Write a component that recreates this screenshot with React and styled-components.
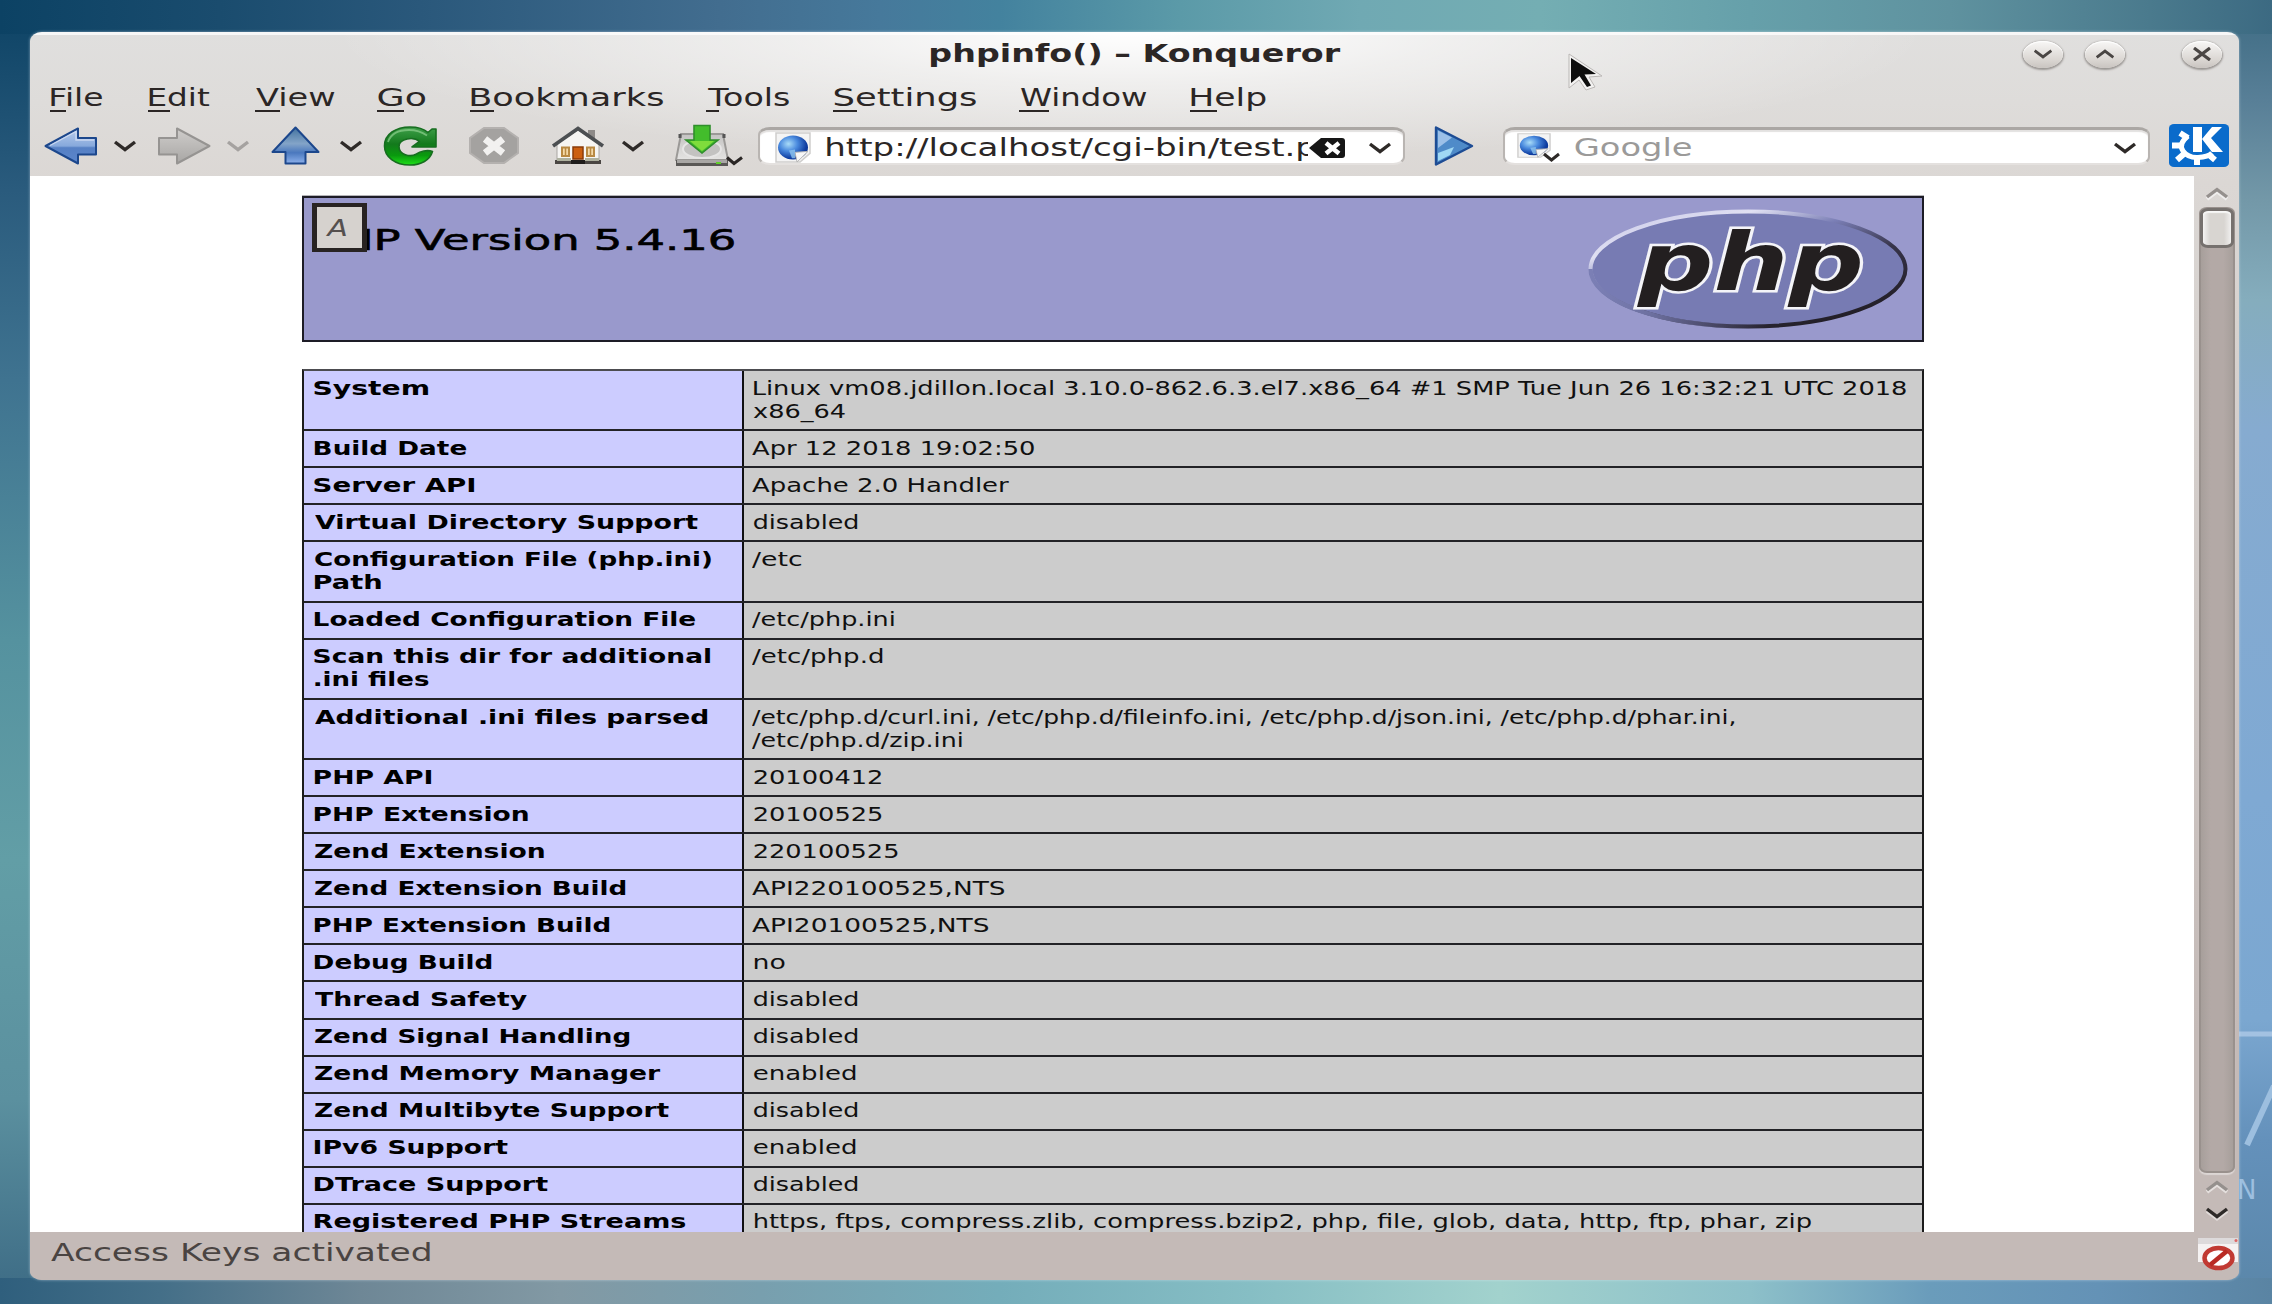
import React from "react";
import styled, { createGlobalStyle } from "styled-components";

const FONT = '"DejaVu Sans", Verdana, sans-serif';

const GlobalStyle = createGlobalStyle`
  * { box-sizing: border-box; }
  body { margin: 0; overflow: hidden; font-family: ${FONT}; }
  svg { display: block; }
`;

/* ---------- text set to an exact inked width ---------- */

const FitBox = styled.span`
  display: block;
  flex: none;
  white-space: pre;
  font-family: ${FONT};
  font-size: ${(p) => p.$size}px;
  font-weight: ${(p) => p.$weight};
  font-style: ${(p) => p.$fontStyle};
  line-height: ${(p) => p.$line}px;
  color: ${(p) => p.$color};
`;

const FitText = styled.span`
  display: inline-block;
  transform-origin: 0 50%;
`;

const pen = document.createElement("canvas").getContext("2d");

function Fit({ children, w, size = 25, weight = 400, fontStyle = "normal", line = 30, color = "#2b2625" }) {
  pen.font = `${fontStyle} ${weight} ${size}px ${FONT}`;
  const m = pen.measureText(children);
  const k = w / (m.actualBoundingBoxLeft + m.actualBoundingBoxRight);
  return (
    <FitBox $size={size} $weight={weight} $fontStyle={fontStyle} $line={line} $color={color} style={{ width: w }}>
      <FitText style={{ transform: `translateX(${m.actualBoundingBoxLeft * k}px) scaleX(${k})` }}>{children}</FitText>
    </FitBox>
  );
}

/* ---------- desktop and window ---------- */

const Desktop = styled.div`
  position: relative;
  width: 2272px;
  height: 1304px;
  padding: 32px 33px 24px 30px;
  overflow: hidden;
  background-color: #5b8ba6;
  background-repeat: no-repeat;
  background-image:
    linear-gradient(90deg, #0c4264 0, #1a4c6e 220px, #2a587b 420px, #426d8f 720px, #46799b 880px, #43829e 1000px, #5b9aa8 1180px, #70a9b3 1360px, #74aeb3 1540px, #66a0aa 1750px, #5f929f 1950px, #4a7a8d 2150px, #3c6a82 100%),
    linear-gradient(90deg, #2f5f7d 0, #446f88 160px, #6e8796 360px, #8299a4 560px, #789fae 760px, #74adba 1000px, #86bec4 1250px, #a2d2cd 1500px, #8dc0c9 1750px, #6a9cbb 1930px, #6492b6 2100px, #5a84a3 100%),
    linear-gradient(180deg, #0c4264 0, #2a5b7d 190px, #3f7390 380px, #55929f 640px, #629ea6 860px, #5b909f 1100px, #3c6a84 100%),
    linear-gradient(180deg, #3c6a82 0, #587f97 100px, #7398a8 200px, #85adbd 300px, #86abd0 430px, #7fa9d3 800px, #7ba7d0 1020px, #6491bb 1140px, #5a86a8 100%);
  background-size: 100% 34px, 100% 26px, 40px 100%, 40px 100%;
  background-position: 0 0, 0 100%, 0 0, 100% 0;
`;

const Wallpaper = styled.svg`
  position: absolute;
  right: 0;
  top: 1000px;
`;

const Window = styled.main`
  position: relative;
  display: flex;
  flex-direction: column;
  height: 1248px;
  border-radius: 12px / 9px;
  overflow: hidden;
  background:
    radial-gradient(ellipse 800px 130px at 1100px 0, #fff 0, rgba(255, 255, 255, 0.52) 40%, rgba(255, 255, 255, 0) 100%) no-repeat,
    linear-gradient(180deg, #e0dfde 0, #dedcda 70px, #dbd7d4 150px, #c4bab7 1000px, #c4bab7 100%);
  box-shadow: 0 0 3px rgba(225, 240, 250, 0.55);
`;

const TitleBar = styled.header`
  display: flex;
  height: 44px;
  flex: none;
  padding: 3px 17px 0 901px;
  border-top: 3px solid rgba(255, 255, 255, 0.75);
`;

const WindowButtons = styled.div`
  display: flex;
  margin-left: auto;
  padding-top: 3px;
`;

const WindowButton = styled.button`
  display: grid;
  place-items: center;
  width: 40px;
  height: 27px;
  margin: 0 0 0 ${(p) => p.$gap}px;
  padding: 0 0 2px;
  border: 0;
  border-radius: 50%;
  background: linear-gradient(#f8f7f6, #dad6d2 70%, #c9c4c0);
  box-shadow: 0 1px 2px 1px #9a9693, inset 0 1px 1px #fff;
`;

const MenuBar = styled.nav`
  display: flex;
  align-items: center;
  flex: none;
  height: 43px;
  padding-left: 21px;
`;

const MenuItem = styled.a`
  position: relative;
  margin-right: ${(p) => p.$gap}px;
  &::after {
    content: "";
    position: absolute;
    left: -1px;
    bottom: 1px;
    width: ${(p) => p.$key}px;
    height: 2px;
    background: #2b2625;
  }
`;

const ToolBar = styled.div`
  display: flex;
  align-items: center;
  flex: none;
  height: 57px;
  padding: 0 0 4px 14px;
`;

const Tool = styled.span`
  flex: none;
  margin-left: ${(p) => p.$gap}px;
`;

const Field = styled.div`
  display: flex;
  align-items: center;
  flex: none;
  width: 647px;
  height: 38px;
  margin-left: ${(p) => p.$gap}px;
  padding: 3px 11px 0 ${(p) => p.$inset}px;
  border: 2px solid #b9b5b2;
  border-top: 3px solid #aba7a4;
  border-bottom-color: #e4e1df;
  border-radius: 12px / 8px;
  background: #fff;
  box-shadow: inset 0 2px 1px #e3e1e0;
`;

const UrlText = styled.div`
  width: 483px;
  padding-left: 2px;
  margin-left: 14px;
  overflow: hidden;
`;

const Push = styled.span`
  margin-left: auto;
`;

const Body = styled.section`
  display: flex;
  flex: none;
  height: 1056px;
`;

const Page = styled.div`
  width: 2164px;
  height: 1056px;
  padding: 20px 0 0 272px;
  overflow: hidden;
  background: #fff;
`;

/* ---------- page content ---------- */

const Banner = styled.div`
  position: relative;
  display: flex;
  justify-content: space-between;
  width: 1622px;
  height: 146px;
  padding: 10px 14px 0 12px;
  border: 2px solid #1d1c26;
  background: #9999cc;
  box-shadow: 0 -1px 0 #b5b5b8;
`;

const Heading = styled.h1`
  margin: 14px 0 0;
  -webkit-text-stroke: 0.6px #000;
`;

const AccessKey = styled.kbd`
  position: absolute;
  left: 8px;
  top: 5px;
  display: flex;
  align-items: center;
  width: 55px;
  height: 49px;
  padding: 0 0 0 8px;
  border: 4px solid #282322;
  border-width: 4px 5px;
  background: #d6d2ce;
`;

const InfoTable = styled.div`
  width: 1622px;
  margin-top: 27px;
  border: 2px solid #1c1c1c;
  border-top-color: #4c4c50;
`;

const InfoRow = styled.div`
  display: grid;
  grid-template-columns: 440px 1fr;
  height: ${(p) => (p.$tall ? 60.25 : 37.06)}px;
  border-bottom: 2px solid #222226;
`;

const NameCell = styled.div`
  padding: ${(p) => `5.6px 0 0 ${p.$inset}px`};
  border-right: 2px solid #101012;
  background: #ccccff;
`;

const ValueCell = styled.div`
  padding: 5.6px 0 0 ${(p) => p.$inset}px;
  background: #cccccc;
`;

/* ---------- scrollbar and status ---------- */

const ScrollBar = styled.aside`
  display: flex;
  flex-direction: column;
  align-items: center;
  width: 45px;
  padding-top: 11px;
`;

const Groove = styled.div`
  width: 36px;
  height: 966px;
  margin: 8px 0 7px;
  border: 2px solid #99918d;
  border-radius: 8px / 6px;
  background: linear-gradient(90deg, #a79f9b, #b3a9a6 30%, #b3a9a6 70%, #a79f9b);
  box-shadow: 0 2px 1px #dcd6d4;
`;

const Thumb = styled.div`
  width: 34px;
  height: 40px;
  margin: -1px 0 0 -1px;
  border: 3px solid #76716e;
  border-radius: 8px / 6px;
  background: linear-gradient(90deg, #f4f3f2, #d8d5d1 25%, #d8d5d1 75%, #f0efee);
  box-shadow: inset 0 2px 1px #f7f7f6;
`;

const DownArrows = styled.div`
  display: flex;
  flex-direction: column;
  gap: 15px;
`;

const StatusBar = styled.footer`
  display: flex;
  flex: none;
  justify-content: space-between;
  height: 48px;
  padding: 6px 1px 0 21px;
  background: #c4bab7;
`;

const Pointer = styled.svg`
  position: absolute;
  left: 1565px;
  top: 51px;
`;

/* ---------- icons ---------- */

const Chevron = ({ w = 24, h = 12, up, color = "#2e2a28", halo = "none" }) => {
  const d = up ? "M2 10 L12 2.5 L22 10" : "M2 2 L12 9.5 L22 2";
  return (
    <svg width={w} height={h} viewBox="0 0 24 12" preserveAspectRatio="none" fill="none" overflow="visible">
      <path d={d} stroke={halo} strokeWidth="4" transform="translate(0 2)" />
      <path d={d} stroke={color} strokeWidth="3.4" />
    </svg>
  );
};

const Defs = styled.svg`
  position: absolute;
`;

const SharedGradients = () => (
  <Defs width="0" height="0">
    <defs>
      <linearGradient id="blue" x1="0" y1="0" x2="0" y2="1">
        <stop offset="0" stopColor="#b9cdec" />
        <stop offset="0.5" stopColor="#87a9dc" />
        <stop offset="0.55" stopColor="#5680c4" />
        <stop offset="1" stopColor="#5b86cc" />
      </linearGradient>
      <linearGradient id="up" x1="0" y1="0" x2="0" y2="1">
        <stop offset="0" stopColor="#42729f" />
        <stop offset="0.45" stopColor="#83a4c8" />
        <stop offset="0.7" stopColor="#4a78be" />
        <stop offset="1" stopColor="#8db1ec" />
      </linearGradient>
      <linearGradient id="grey" x1="0" y1="0" x2="0" y2="1">
        <stop offset="0" stopColor="#cfcdcb" />
        <stop offset="1" stopColor="#a8a6a4" />
      </linearGradient>
      <linearGradient id="green" x1="0" y1="0" x2="0" y2="1">
        <stop offset="0" stopColor="#3f9f4a" />
        <stop offset="0.45" stopColor="#137a1c" />
        <stop offset="0.75" stopColor="#0a9a0e" />
        <stop offset="1" stopColor="#1fe01a" />
      </linearGradient>
      <linearGradient id="drive" x1="0" y1="0" x2="0" y2="1">
        <stop offset="0" stopColor="#c4c3c2" />
        <stop offset="1" stopColor="#e4e3e2" />
      </linearGradient>
      <radialGradient id="globe" cx="0.35" cy="0.35" r="0.75">
        <stop offset="0" stopColor="#a9dcf8" />
        <stop offset="0.4" stopColor="#4a8ade" />
        <stop offset="0.8" stopColor="#0f3da0" />
        <stop offset="1" stopColor="#0f3590" />
      </radialGradient>
    </defs>
  </Defs>
);

const Back = () => (
  <svg width="54" height="38" viewBox="0 0 54 38">
    <path d="M1.5 19 L34 1.5 V11 H52 V27.5 H34 V36.5 Z" fill="url(#blue)" stroke="#1c478c" strokeWidth="2" strokeLinejoin="round" />
    <path d="M6 18.5 L32 4.5 V13 H50" fill="none" stroke="#d4e0f4" strokeWidth="1.4" opacity=".8" />
  </svg>
);

const Forward = () => (
  <svg width="54" height="38" viewBox="0 0 54 38">
    <path d="M52.5 19 L20 1.5 V11 H2 V27.5 H20 V36.5 Z" fill="url(#grey)" stroke="#969492" strokeWidth="2" strokeLinejoin="round" />
  </svg>
);

const Up = () => (
  <svg width="49" height="39" viewBox="0 0 49 39">
    <path d="M24.5 1.5 L47.5 26 H34.5 V37.5 H14.5 V26 H1.5 Z" fill="url(#up)" stroke="#1c478c" strokeWidth="2" strokeLinejoin="round" />
  </svg>
);

/* open ring with a thick stroke, and a square-cornered arrow head at its upper right */
const Reload = () => (
  <svg width="54" height="40" viewBox="0 0 54 40">
    <path
      d="M53 3 V21 H29 L36.500 15.500 C31 10.500 16 12 16 20.500 C16 29 27 31.500 33.500 28 C37 25.500 44 23.500 49.500 25.500 C47 34 38 39 27 39 C12 39 1.500 31 1.500 20 C1.500 8 13 1 27 1 C35 1 41 3 45 6.500 L49 3 Z"
      fill="url(#green)"
      stroke="#176e20"
      strokeWidth="1.6"
      strokeLinejoin="round"
    />
    <path d="M5 16 C8 7 17 4 26 4 C34 4 39 6 44 9.500" fill="none" stroke="#8fd08f" strokeWidth="1.800" opacity=".7" />
  </svg>
);

const Stop = () => (
  <svg width="50" height="37" viewBox="0 0 50 37">
    <path d="M15 1 H35 L49 11 V26 L35 36 H15 L1 26 V11 Z" fill="#a4a2a0" stroke="#b4b1af" strokeWidth="2" />
    <path d="M16 12 L34 26 M34 12 L16 26" stroke="#f2f1f0" strokeWidth="7" />
  </svg>
);

const Home = () => (
  <svg width="54" height="39" viewBox="0 0 54 39">
    <path d="M37 4 H44 V13 H37 Z" fill="#8d8a88" />
    <path d="M6 18 L27 4 L48 18 V35 H6 Z" fill="#f6f5f3" stroke="#a9a6a3" />
    <path d="M4 34 H50 V38 H4 Z" fill="#4a4643" />
    <path d="M6 32 H20 V35 H6 Z M34 32 H48 V35 H34 Z" fill="#aeb19f" />
    <path d="M2 20 L27 2.500 L52 20" fill="none" stroke="#4c4f52" strokeWidth="3.600" />
    <path d="M11 21.500 H18 V30 H11 Z M36 21.500 H43 V30 H36 Z" fill="#f4d9a8" stroke="#b98a44" strokeWidth="2" />
    <path d="M14.500 21.500 V30 M39.500 21.500 V30" stroke="#b98a44" strokeWidth="1.500" />
    <path d="M22 21 H32 V33 H22 Z" fill="#cc5f10" stroke="#8a3b08" strokeWidth="1.500" />
    <path d="M20 34 H34 V38 H20 Z" fill="#1f1d1c" />
  </svg>
);

const Save = () => (
  <svg width="68" height="44" viewBox="0 0 68 44">
    <path d="M6 10 H48 L53 36 H1 Z" fill="url(#drive)" stroke="#9b9997" strokeWidth="2" />
    <path d="M5 10 V14 M49 10 V14" stroke="#555" strokeWidth="3" />
    <ellipse cx="27" cy="25" rx="19" ry="9" fill="#c3c2c1" stroke="#e6e5e5" strokeWidth="2" />
    <path d="M1 36 H53 V42 H1 Z" fill="#5a5856" />
    <path d="M2 36 H52 V39 H2 Z" fill="#a9a7a5" />
    <path d="M41 38 H46 V40 H41 Z" fill="#5fd02a" />
    <path d="M19 1.500 H35 V16 H43 L27 29 L11 16 H19 Z" fill="#43bd2c" stroke="#2f8f2b" strokeWidth="1.600" />
    <path d="M15 17 H39 L27 27 Z" fill="#7fdc3c" />
    <path d="M52 33.500 L59 39.500 L67 33.500" fill="none" stroke="#2a2625" strokeWidth="3" />
  </svg>
);

const Globe = ({ w, h }) => (
  <svg width={w} height={h} viewBox="0 0 36 32" preserveAspectRatio="none">
    <path d="M1 1 H35 V22 L25 31 H1 Z" fill="#f4f4f4" stroke="#cfcecd" strokeWidth="1.500" />
    <ellipse cx="18" cy="16" rx="15" ry="12.500" fill="url(#globe)" />
    <path d="M20 21 L33 20 L22 31 Z" fill="#f7f7f7" stroke="#b5b5b5" />
    <path d="M14 19 L20 18 L20 27 L17 27 Z" fill="#8fc4ee" opacity=".8" />
  </svg>
);

const Clear = () => (
  <svg width="38" height="22" viewBox="0 0 38 22">
    <path d="M1 11 L13 1 H34 Q37 1 37 4 V18 Q37 21 34 21 H13 Z" fill="#161616" />
    <path d="M18 6 L31 16.500 M31 6 L18 16.500" stroke="#fff" strokeWidth="4.500" />
  </svg>
);

const Go = () => (
  <svg width="40" height="40" viewBox="0 0 40 40">
    <path d="M2 1.500 L38 20 L2 38.500 Z" fill="#4f8bc9" stroke="#1d4c94" strokeWidth="2.400" strokeLinejoin="round" />
    <path d="M4 4.500 L18 11.500 L4 22 Z" fill="#9cc0e8" />
    <path d="M4 27 L20 21 L16 29 L4 35 Z" fill="#9fd8f4" />
  </svg>
);

/* gear arc with teeth on the left and bottom, K over its upper right */
const Kde = () => (
  <svg width="60" height="43" viewBox="0 0 60 43">
    <rect width="60" height="43" rx="5" ry="4" fill="#0a6bcb" />
    <path d="M19 12 Q9 20 14 27 Q19 34 29 33.500 Q39 33 43 29" fill="none" stroke="#fff" strokeWidth="5" />
    <path d="M11 9 L19 14 M3 21.500 H13 M8 36 L16 29 M28 33 V41 M46 36 L39 30" stroke="#fff" strokeWidth="6" />
    <path d="M24 3 H33 V28 H24 Z M43 3 H53 L42 14 L54 28 H43 L33 15 Z" fill="#fff" />
  </svg>
);

const Blocked = () => (
  <svg width="40" height="33" viewBox="0 0 40 33">
    <path d="M0 0 H40 V24 H0 Z" fill="#f5f2f2" />
    <path d="M0 0 H40 V6 H0 Z" fill="#dddadb" />
    <circle cx="38" cy="2.500" r="1.500" fill="#d66" />
    <ellipse cx="20.500" cy="20" rx="14" ry="10" fill="#fff" stroke="#c13a33" strokeWidth="4.500" />
    <path d="M12 27 L29 13" stroke="#b92b24" strokeWidth="4.500" />
  </svg>
);

const PhpLogo = () => (
  <svg width="322" height="124" viewBox="0 0 322 124">
    <defs>
      <linearGradient id="rim" x1="0.1" y1="0" x2="0.9" y2="1">
        <stop offset="0" stopColor="#c9c9e8" />
        <stop offset="0.2" stopColor="#e0e0f2" />
        <stop offset="0.38" stopColor="#7a7eb5" />
        <stop offset="0.6" stopColor="#37344a" />
        <stop offset="1" stopColor="#1c181c" />
      </linearGradient>
      <linearGradient id="rimFade" x1="0" y1="0" x2="1" y2="0">
        <stop offset="0" stopColor="#7b7fb5" stopOpacity="1" />
        <stop offset="0.35" stopColor="#7276a8" stopOpacity="0.9" />
        <stop offset="1" stopColor="#6a6c9c" stopOpacity="0" />
      </linearGradient>
    </defs>
    <ellipse cx="162" cy="61" rx="157.500" ry="57.500" fill="#777bb3" stroke="url(#rim)" strokeWidth="4" />
    <path d="M4.500 61 A157.500 57.500 0 0 0 180 118.200" fill="none" stroke="url(#rimFade)" strokeWidth="4.400" />
    <text
      x="52"
      y="78"
      transform="translate(0 4)"
      fontFamily={FONT}
      fontWeight="700"
      fontStyle="italic"
      fontSize="80"
      textLength="226"
      lengthAdjust="spacingAndGlyphs"
      fill="#231f20"
      stroke="#f4f4f8"
      strokeWidth="5"
      paintOrder="stroke"
    >
      php
    </text>
  </svg>
);

/* ---------- data: [text, inked width, gap after, underline width] ---------- */

const MENU = [
  ["File", 52, 46, 16],
  ["Edit", 61, 46, 22],
  ["View", 79, 43, 25],
  ["Go", 47, 46, 27],
  ["Bookmarks", 192, 44, 24],
  ["Tools", 82, 45, 13],
  ["Settings", 142, 44, 24],
  ["Window", 127, 44, 30],
  ["Help", 75, 0, 27],
];

const ROWS = [
  { name: [["System", 115]], value: [["Linux vm08.jdillon.local 3.10.0-862.6.3.el7.x86_64 #1 SMP Tue Jun 26 16:32:21 UTC 2018", 1153], ["x86_64", 93]], inset: 9 },
  { name: [["Build Date", 152]], value: [["Apr 12 2018 19:02:50", 282]] },
  { name: [["Server API", 161]], value: [["Apache 2.0 Handler", 257]] },
  { name: [["Virtual Directory Support", 383]], value: [["disabled", 104]], nameInset: 11, inset: 10 },
  { name: [["Configuration File (php.ini)", 398], ["Path", 68]], value: [["/etc", 50]] },
  { name: [["Loaded Configuration File", 381]], value: [["/etc/php.ini", 142]] },
  { name: [["Scan this dir for additional", 396], [".ini files", 115]], value: [["/etc/php.d", 131]] },
  {
    name: [["Additional .ini files parsed", 392]],
    value: [["/etc/php.d/curl.ini, /etc/php.d/fileinfo.ini, /etc/php.d/json.ini, /etc/php.d/phar.ini,", 983], ["/etc/php.d/zip.ini", 210]],
    nameInset: 11,
  },
  { name: [["PHP API", 118]], value: [["20100412", 128]], inset: 10 },
  { name: [["PHP Extension", 215]], value: [["20100525", 128]], inset: 10 },
  { name: [["Zend Extension", 231]], value: [["220100525", 144]], inset: 10 },
  { name: [["Zend Extension Build", 311]], value: [["API220100525,NTS", 252]] },
  { name: [["PHP Extension Build", 295]], value: [["API20100525,NTS", 236]] },
  { name: [["Debug Build", 177]], value: [["no", 31]], inset: 10 },
  { name: [["Thread Safety", 213]], value: [["disabled", 104]], nameInset: 11, inset: 10 },
  { name: [["Zend Signal Handling", 315]], value: [["disabled", 104]], inset: 10 },
  { name: [["Zend Memory Manager", 347]], value: [["enabled", 102]], inset: 10 },
  { name: [["Zend Multibyte Support", 355]], value: [["disabled", 104]], inset: 10 },
  { name: [["IPv6 Support", 194]], value: [["enabled", 102]], inset: 10 },
  { name: [["DTrace Support", 234]], value: [["disabled", 104]], inset: 10 },
  { name: [["Registered PHP Streams", 372]], value: [["https, ftps, compress.zlib, compress.bzip2, php, file, glob, data, http, ftp, phar, zip", 1058]], inset: 10 },
];

const Lines = ({ items, weight, color }) =>
  items.map(([text, w]) => (
    <Fit key={text} w={w} size={19} weight={weight} line={23.2} color={color}>
      {text}
    </Fit>
  ));

export default function App() {
  return (
    <Desktop>
      <GlobalStyle />
      <SharedGradients />
      <Wallpaper width="40" height="220" viewBox="0 0 40 220">
        <path d="M0 34 H40" stroke="#a3c2e2" strokeWidth="5" />
        <path d="M15 145 L42 86" stroke="#9dbfdf" strokeWidth="6" />
        <text x="5" y="199" fontFamily={FONT} fontSize="26" fill="#9dbfdf">N</text>
      </Wallpaper>
      <Window>
        <TitleBar>
          <Fit w={410} weight={700} line={31}>phpinfo() – Konqueror</Fit>
          <WindowButtons>
            <WindowButton $gap={0}><Chevron w={20} h={10} color="#4a4644" /></WindowButton>
            <WindowButton $gap={22}><Chevron w={20} h={10} up color="#4a4644" /></WindowButton>
            <WindowButton $gap={57}>
              <svg width="20" height="14" viewBox="0 0 20 14">
                <path d="M2 1 L18 13 M18 1 L2 13" stroke="#4a4644" strokeWidth="3.200" />
              </svg>
            </WindowButton>
          </WindowButtons>
        </TitleBar>
        <MenuBar>
          {MENU.map(([text, w, gap, key]) => (
            <MenuItem key={text} $gap={gap} $key={key}>
              <Fit w={w}>{text}</Fit>
            </MenuItem>
          ))}
        </MenuBar>
        <ToolBar>
          <Tool><Back /></Tool>
          <Tool $gap={15}><Chevron /></Tool>
          <Tool $gap={20}><Forward /></Tool>
          <Tool $gap={15}><Chevron color="#a5a2a0" /></Tool>
          <Tool $gap={21}><Up /></Tool>
          <Tool $gap={19}><Chevron /></Tool>
          <Tool $gap={20}><Reload /></Tool>
          <Tool $gap={32}><Stop /></Tool>
          <Tool $gap={32}><Home /></Tool>
          <Tool $gap={16}><Chevron /></Tool>
          <Tool $gap={30}><Save /></Tool>
          <Field $gap={15} $inset={15}>
            <Globe w={36} h={31} />
            <UrlText><Fit w={509}>http://localhost/cgi-bin/test.ph</Fit></UrlText>
            <Clear />
            <Push><Chevron /></Push>
          </Field>
          <Tool $gap={29}><Go /></Tool>
          <Field $gap={29} $inset={12}>
            <svg width="43" height="29" viewBox="0 0 43 29">
              <Globe w={34} h={25} />
              <path d="M27 21 L34.500 27 L42 21" fill="none" stroke="#2e2a28" strokeWidth="3" />
            </svg>
            <Tool $gap={15}><Fit w={117} color="#9b9a99">Google</Fit></Tool>
            <Push><Chevron /></Push>
          </Field>
          <Tool $gap={19}><Kde /></Tool>
        </ToolBar>
        <Body>
          <Page>
            <Banner>
              <Heading>
                <Fit w={418} size={29} line={36} color="#000">PHP Version 5.4.16</Fit>
              </Heading>
              <PhpLogo />
              <AccessKey>
                <Fit w={22} size={23} fontStyle="italic" color="#55504e">A</Fit>
              </AccessKey>
            </Banner>
            <InfoTable>
              {ROWS.map((r) => (
                <InfoRow key={r.name[0][0]} $tall={r.name.length + r.value.length > 2}>
                  <NameCell $inset={r.nameInset || 10}><Lines items={r.name} weight={700} color="#000" /></NameCell>
                  <ValueCell $inset={r.inset || 8}><Lines items={r.value} weight={400} color="#101010" /></ValueCell>
                </InfoRow>
              ))}
            </InfoTable>
          </Page>
          <ScrollBar>
            <Chevron up color="#95908d" halo="#efedec" />
            <Groove><Thumb /></Groove>
            <DownArrows>
              <Chevron up color="#95908d" halo="#e5e0de" />
              <Chevron halo="#e0dad8" />
            </DownArrows>
          </ScrollBar>
        </Body>
        <StatusBar>
          <Fit w={379} color="#4a4442">Access Keys activated</Fit>
          <Blocked />
        </StatusBar>
      </Window>
      <Pointer width="40" height="42" viewBox="0 0 40 42">
        <path d="M4 3 V37 L14 29 L21 39 L30 36 L24 26 L37 25 Z" fill="#f3f2f1" stroke="#bbb8b6" strokeWidth="1" />
        <path d="M6 7 V32 L14.500 25 L22 36 L26 34.500 L19.500 23.500 L31 23 Z" fill="#0d0d0d" />
      </Pointer>
    </Desktop>
  );
}
